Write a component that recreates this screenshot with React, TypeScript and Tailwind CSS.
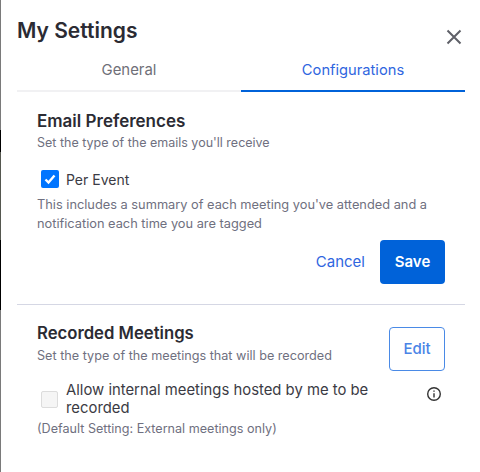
const font = "font-['Inter','Liberation_Sans',sans-serif]";

export default function App() {
  return (
    <div className={`flex h-[472px] w-[480px] overflow-hidden bg-white ${font}`}>
      <div className="flex w-px shrink-0 flex-col">
        <div className="h-[130px] bg-[#7a7a7a]" />
        <div className="h-[22px] bg-black" />
        <div className="h-[88px] bg-[#55574f]" />
        <div className="h-[70px] bg-black" />
        <div className="flex-1 bg-[#7a7a7a]" />
      </div>
      <div className="min-w-0 flex-1 pr-[15px] pl-[16px]">
        <div className="flex h-[64px] items-start justify-between">
          <h1 className="mt-[18px] text-[21px] leading-[26px] font-semibold text-[#2b2b33]">My Settings</h1>
          <svg className="mt-[29px] mr-[3px]" width="16" height="16" viewBox="0 0 16 16" fill="none" stroke="#5f6068" strokeWidth="2">
            <path d="M1.5 1.5L14.5 14.5M14.5 1.5L1.5 14.5" />
          </svg>
        </div>
        <div className="flex h-[28px]">
          <div className="flex h-[28px] w-[224px] items-start justify-center border-b-2 border-[#f1f1f3] text-[14.9px] leading-[12px] text-[#6f6f78]">General</div>
          <div className="flex h-[28px] flex-1 items-start justify-center border-b-2 border-[#0062d9] text-[14.7px] leading-[12px] text-[#2f66e0]">Configurations</div>
        </div>
        <section className="border-b border-[#d5d7e4] pr-[20px] pb-[20px] pl-[20px]">
          <h2 className="mt-[18px] text-[17px] leading-[22px] font-semibold text-[#2b2b33]">Email Preferences</h2>
          <p className="mt-[2px] text-[12.5px] leading-[18px] text-[#6f7080]">Set the type of the emails you'll receive</p>
          <label className="mt-[16px] flex h-[22px] items-center">
            <span className="ml-[4px] flex h-[18px] w-[18px] items-center justify-center rounded-[2px] bg-[#0075ff]">
              <svg width="14" height="14" viewBox="0 0 14 14" fill="none" stroke="#fff" strokeWidth="2.4">
                <path d="M2.5 7.5L5.5 10.5L11.5 3.5" />
              </svg>
            </span>
            <span className="ml-[7px] text-[14px] text-[#3b3b44]">Per Event</span>
          </label>
          <p className="mt-[5px] text-[12.8px] leading-[19px] text-[#6f7080]">
            This includes a summary of each meeting you've attended and a notification each time you are tagged
          </p>
          <div className="mt-[7px] flex items-center justify-end">
            <button className="mr-[15px] text-[15px] text-[#2f66e0]">Cancel</button>
            <button className="h-[44px] w-[65px] rounded-[4px] bg-[#0062d9] text-[15px] font-semibold text-white">Save</button>
          </div>
        </section>
        <section className="pr-[20px] pl-[20px]">
          <div className="flex items-start justify-between">
            <div>
              <h2 className="mt-[17px] text-[16.7px] leading-[22px] font-semibold text-[#2b2b33]">Recorded Meetings</h2>
              <p className="mt-[3px] text-[12.65px] leading-[18px] text-[#6f7080]">Set the type of the meetings that will be recorded</p>
            </div>
            <button className="mt-[22px] h-[44px] w-[56px] rounded-[4px] border border-[#4a8ae6] text-[15px] font-medium text-[#4a84e6]">Edit</button>
          </div>
          <div className="mt-[10px] flex items-start">
            <span className="mt-[10px] ml-[4px] h-[17px] w-[17px] shrink-0 rounded-[2px] border border-[#dcdcdc] bg-[#f5f5f5]" />
            <span className="ml-[8px] w-[340px] text-[14.85px] leading-[18px] text-[#3b3b44]">Allow internal meetings hosted by me to be recorded</span>
            <svg className="mt-[5px] ml-[20px] shrink-0" width="16" height="16" viewBox="0 0 16 16" fill="none" stroke="#333" strokeWidth="1.4">
              <circle cx="8" cy="8" r="6.3" />
              <path d="M8 7.2V11.6M8 4.4V5.8" />
            </svg>
          </div>
          <p className="mt-[3px] text-[12.6px] leading-[18px] text-[#6f7080]">(Default Setting: External meetings only)</p>
        </section>
      </div>
    </div>
  );
}
